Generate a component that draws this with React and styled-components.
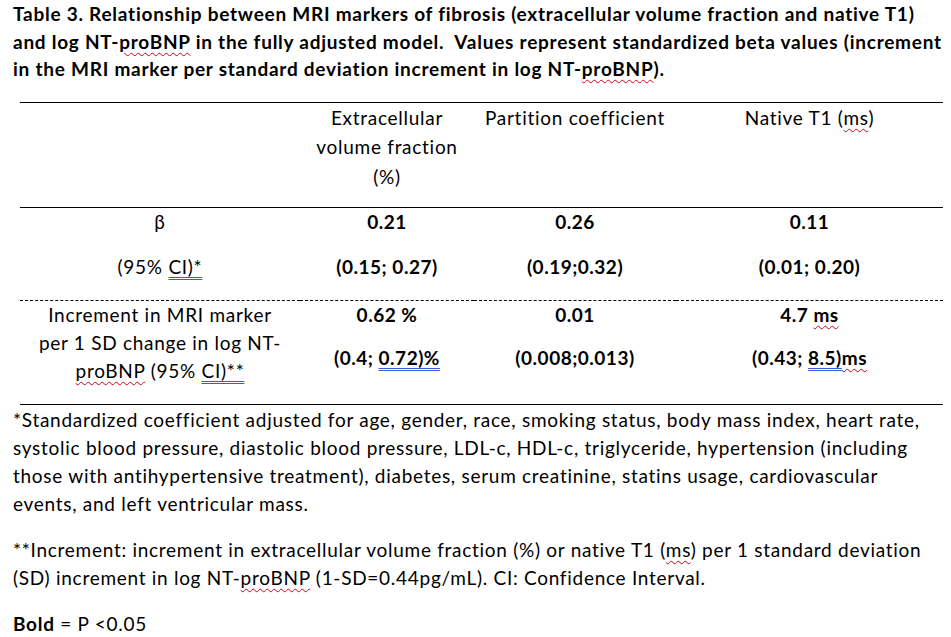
import React from 'react';
import styled, { createGlobalStyle } from 'styled-components';

const GlobalStyle = createGlobalStyle`
  html, body {
    margin: 0;
    padding: 0;
    background: #ffffff;
  }
  body {
    font-family: Lato, "Open Sans", "Liberation Sans", sans-serif;
    color: #000;
    font-size: 19px;
    letter-spacing: 0.72px;
  }
`;

const Page = styled.div`
  width: 951px;
  height: 637px;
  overflow: hidden;
  padding: 0 0 0 13px;
  box-sizing: border-box;
`;

const Title = styled.p`
  margin: 0;
  font-weight: bold;
  line-height: 27.5px;
  letter-spacing: 0.75px;
  white-space: nowrap;
`;

const Table = styled.table`
  margin: 19px 0 0 7px;
  width: 923px;
  border-collapse: collapse;
  table-layout: fixed;
  border-top: 1.5px solid #000;
  border-bottom: 1.5px solid #000;
`;

const Row = styled.tr`
  border-bottom: ${(p) => (p.$dashed ? '1px dashed #000' : p.$solid ? '1.5px solid #000' : 'none')};
`;

const Cell = styled.td`
  padding: 0 0 ${(p) => p.$pb || 0}px;
  text-align: center;
  vertical-align: top;
  line-height: ${(p) => p.$lh || 28}px;
  font-weight: ${(p) => (p.$bold ? 'bold' : 'normal')};
  letter-spacing: ${(p) => (p.$bold ? '0.5px' : '0.72px')};
  white-space: nowrap;
`;

const Para = styled.div`
  margin-bottom: ${(p) => p.$mb || 0}px;
`;

const Spell = styled.span`
  text-decoration: underline wavy #d0021b;
  text-decoration-thickness: 1px;
  text-underline-offset: 3px;
`;

const Grammar = styled.span`
  text-decoration: underline double #3b5bd6;
  text-decoration-thickness: 1px;
  text-underline-offset: 3px;
`;

const Notes = styled.div`
  margin-top: 1px;
`;

const Note = styled.p`
  margin: 0 0 18px;
  line-height: 28px;
  white-space: nowrap;
`;

export default function App() {
  return (
    <>
      <GlobalStyle />
      <Page>
        <Title>
          Table 3. Relationship between MRI markers of fibrosis (extracellular volume fraction and native T1)
          <br />
          and log NT-<Spell>proBNP</Spell> in the fully adjusted model.&nbsp; Values represent standardized beta values (increment
          <br />
          in the MRI marker per standard deviation increment in log NT-<Spell>proBNP</Spell>).
        </Title>
        <Table>
          <colgroup>
            <col style={{ width: 280 }} />
            <col style={{ width: 174 }} />
            <col style={{ width: 202 }} />
            <col style={{ width: 267 }} />
          </colgroup>
          <tbody>
            <Row $solid>
              <Cell $lh={29.5} $pb={16} />
              <Cell $lh={29.5} $pb={16}>
                Extracellular
                <br />
                volume fraction
                <br />
                (%)
              </Cell>
              <Cell $lh={29.5} $pb={16}>Partition coefficient</Cell>
              <Cell $lh={29.5} $pb={16}>
                Native T1 (<Spell>ms</Spell>)
              </Cell>
            </Row>
            <Row $dashed>
              <Cell $pb={19}>
                <Para $mb={17}>β</Para>
                <Para>
                  (95% <Grammar>CI)*</Grammar>
                </Para>
              </Cell>
              <Cell $bold $pb={19}>
                <Para $mb={17}>0.21</Para>
                <Para>(0.15; 0.27)</Para>
              </Cell>
              <Cell $bold $pb={19}>
                <Para $mb={17}>0.26</Para>
                <Para>(0.19;0.32)</Para>
              </Cell>
              <Cell $bold $pb={19}>
                <Para $mb={17}>0.11</Para>
                <Para>(0.01; 0.20)</Para>
              </Cell>
            </Row>
            <Row>
              <Cell $pb={19}>
                Increment in MRI marker
                <br />
                per 1 SD change in log NT-
                <br />
                <Spell>proBNP</Spell> (95% <Grammar>CI)**</Grammar>
              </Cell>
              <Cell $bold $pb={19}>
                <Para $mb={15}>0.62 %</Para>
                <Para>
                  (0.4; <Grammar>0.72)%</Grammar>
                </Para>
              </Cell>
              <Cell $bold $pb={19}>
                <Para $mb={15}>0.01</Para>
                <Para>(0.008;0.013)</Para>
              </Cell>
              <Cell $bold $pb={19}>
                <Para $mb={15}>
                  4.7 <Spell>ms</Spell>
                </Para>
                <Para>
                  (0.43; <Grammar>8.5)</Grammar>
                  <Spell>ms</Spell>
                </Para>
              </Cell>
            </Row>
          </tbody>
        </Table>
        <Notes>
          <Note>
            *Standardized coefficient adjusted for age, gender, race, smoking status, body mass index, heart rate,
            <br />
            systolic blood pressure, diastolic blood pressure, LDL-c, HDL-c, triglyceride, hypertension (including
            <br />
            those with antihypertensive treatment), diabetes, serum creatinine, statins usage, cardiovascular
            <br />
            events, and left ventricular mass.
          </Note>
          <Note>
            **Increment: increment in extracellular volume fraction (%) or native T1 (<Spell>ms</Spell>) per 1 standard deviation
            <br />
            (SD) increment in log NT-<Spell>proBNP</Spell> (1-SD=0.44pg/mL). CI: Confidence Interval.
          </Note>
          <Note>
            <b>Bold</b> = P &lt;0.05
          </Note>
        </Notes>
      </Page>
    </>
  );
}
